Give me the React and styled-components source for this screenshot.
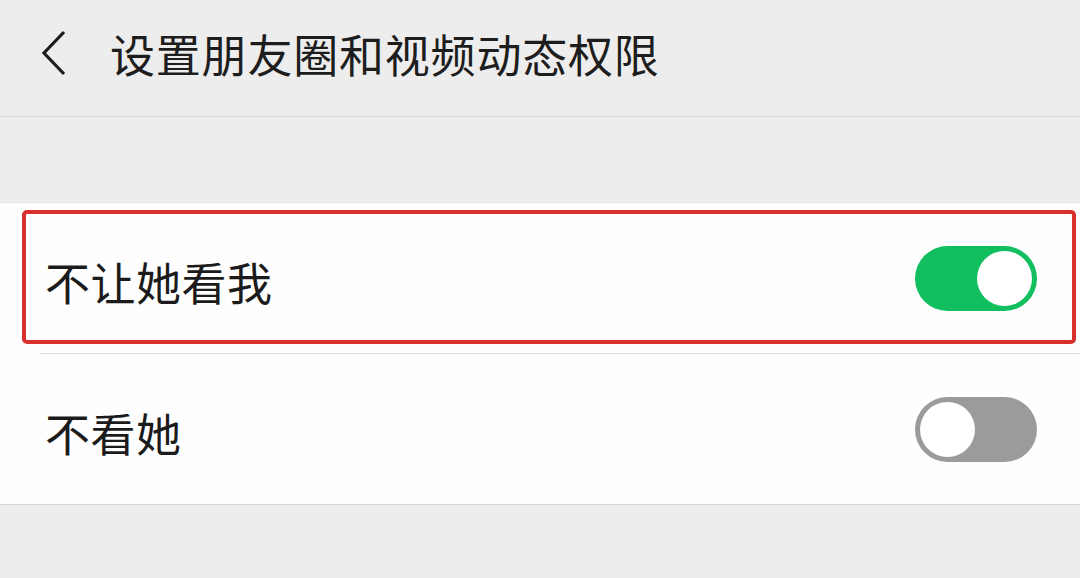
import styled, { createGlobalStyle } from 'styled-components';

const GlobalStyle = createGlobalStyle`
  html, body {
    margin: 0;
    padding: 0;
    background: #ededed;
  }
  body {
    font-family: 'Noto Sans CJK SC', 'Noto Sans', sans-serif;
    color: #1b1b1b;
  }
`;

const Page = styled.div`
  width: 1080px;
  height: 578px;
  overflow: hidden;
  background: #ededed;
`;

/* 顶部导航 */
const Header = styled.header`
  display: flex;
  align-items: center;
  height: 117px;
  padding: 0 0 10px 38px;
  box-sizing: border-box;
  border-bottom: 1px solid #d8d8d8;
`;

const BackBtn = styled.button`
  display: flex;
  align-items: center;
  justify-content: center;
  width: 32px;
  height: 48px;
  padding: 0;
  border: 0;
  background: none;
  svg {
    width: 30px;
    height: 48px;
  }
`;

const Title = styled.h1`
  margin: 0 0 0 40px;
  font-size: 45px;
  font-weight: 400;
  letter-spacing: 0.8px;
  color: #1d1d1d;
`;

const Gap = styled.div`
  height: 85px;
`;

/* 设置列表 */
const Section = styled.section`
  background: #fefefe;
  border-top: 1px solid #e2e2e2;
  border-bottom: 1px solid #d6d6d6;
`;

const Row = styled.div`
  position: relative;
  display: flex;
  align-items: center;
  justify-content: space-between;
  height: 150px;
  padding: 0 43px 0 45px;
  & + & {
    border-top: 1px solid transparent;
  }
  & + &::before {
    content: '';
    position: absolute;
    top: -1px;
    left: 40px;
    right: 0;
    height: 1px;
    background: #dcdcdc;
  }
`;

const Label = styled.span`
  font-size: 45px;
  line-height: 1;
  padding-top: 6px;
  letter-spacing: 0.5px;
  color: #1b1b1b;
`;

const Highlight = styled.div`
  position: absolute;
  top: 7px;
  left: 22px;
  right: 4px;
  bottom: 9px;
  border: 4px solid #d8302c;
  border-radius: 5px;
  pointer-events: none;
`;

const Switch = styled.div`
  position: relative;
  width: 122px;
  height: 65px;
  border-radius: 33px;
  background: ${(p) => (p.$on ? '#12bf5e' : '#9b9b9b')};
  &::after {
    content: '';
    position: absolute;
    top: 5px;
    left: ${(p) => (p.$on ? '62px' : '5px')};
    width: 55px;
    height: 55px;
    border-radius: 50%;
    background: #fff;
  }
`;

const items = [
  { label: '不让她看我', on: true, marked: true },
  { label: '不看她', on: false, marked: false },
];

const App = () => {
  return (
    <Page>
      <GlobalStyle />
      <Header>
        <BackBtn>
          <svg viewBox='0 0 30 48' fill='none'>
            <path d='M25 3 L5 24 L25 45' stroke='#1d1d1d' strokeWidth='3.2' />
          </svg>
        </BackBtn>
        <Title>设置朋友圈和视频动态权限</Title>
      </Header>
      <Gap />
      <Section>
        {items.map((item) => (
          <Row key={item.label}>
            <Label>{item.label}</Label>
            <Switch $on={item.on} />
            {item.marked && <Highlight />}
          </Row>
        ))}
      </Section>
    </Page>
  );
};

export default App;
